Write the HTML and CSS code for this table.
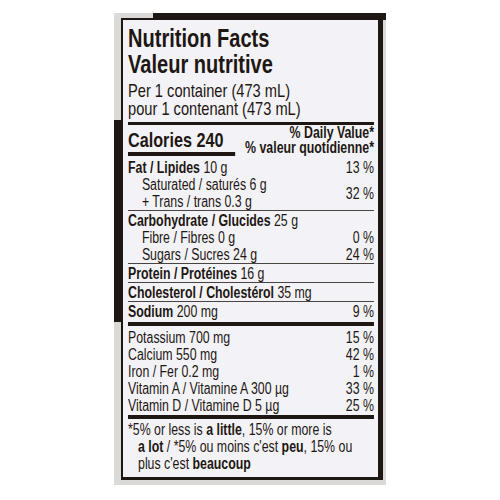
FILE: index.html
```
<!DOCTYPE html>
<html lang="en">
<head>
  <meta charset="utf-8">
  <link rel="stylesheet" href="styles.css">
</head>
<body>
  <div class="paper">
    <div class="label">
      <div class="content">
        <h1 class="title">Nutrition Facts<br>Valeur nutritive</h1>
        <div class="serving">Per 1 container (473 mL)<br>pour 1 contenant (473 mL)</div>

        <div class="cal-head">
          <div class="calories">Calories 240</div>
          <div class="dv">% Daily Value*<br>% valeur quotidienne*</div>
        </div>

        <div class="group first">
          <div class="row"><span><b>Fat / Lipides</b> 10 g</span><span>13 %</span></div>
          <div class="row">
            <span class="sub">Saturated / saturés 6 g<br>+ Trans / trans 0.3 g</span>
            <span>32 %</span>
          </div>
        </div>

        <div class="group">
          <div class="row"><span><b>Carbohydrate / Glucides</b> 25 g</span></div>
          <div class="row"><span class="sub">Fibre / Fibres 0 g</span><span>0 %</span></div>
          <div class="row"><span class="sub">Sugars / Sucres 24 g</span><span>24 %</span></div>
        </div>

        <div class="group">
          <div class="row"><span><b>Protein / Protéines</b> 16 g</span></div>
        </div>
        <div class="group">
          <div class="row"><span><b>Cholesterol / Cholestérol</b> 35 mg</span></div>
        </div>
        <div class="group last">
          <div class="row"><span><b>Sodium</b> 200 mg</span><span>9 %</span></div>
        </div>

        <div class="minerals">
          <div class="row"><span>Potassium 700 mg</span><span>15 %</span></div>
          <div class="row"><span>Calcium 550 mg</span><span>42 %</span></div>
          <div class="row"><span>Iron / Fer 0.2 mg</span><span>1 %</span></div>
          <div class="row"><span>Vitamin A / Vitamine A 300 µg</span><span>33 %</span></div>
          <div class="row"><span>Vitamin D / Vitamine D 5 µg</span><span>25 %</span></div>
        </div>

        <p class="note">*5% or less is <b>a little</b>, 15% or more is<br><b>a lot</b> / *5% ou moins c'est <b>peu</b>, 15% ou<br>plus c'est <b>beaucoup</b></p>
      </div>
    </div>
  </div>
</body>
</html>
```

FILE: styles.css
```
body {
  margin: 0;
  background: #ffffff;
  font-family: "Liberation Sans", Arial, sans-serif;
  color: #1e1713;
}
/* photographed carton around the label */
.paper {
  width: 262px;
  margin: 13px 0 0 114px;
  padding: 5px 3px 5px 7px;
  background-color: #dcdad8;
  background-image:
    linear-gradient(#1e1713, #1e1713),
    linear-gradient(to bottom, #dcdad8 0 107px, #1e1713 107px 309px, #dcdad8 309px);
  background-position: 39px 0, 0 0;
  background-size: 100% 7px, 7px 100%;
  background-repeat: no-repeat;
}
.label {
  background: #f3f3f7;
  border: 2px solid #1e1713;
  border-right-width: 5px;
  border-bottom-width: 3px;
  padding: 0 6px 0 5px;
}
/* the print uses a condensed face: squeeze a regular one */
.content {
  width: 319px;
  transform: scaleX(0.771);
  transform-origin: 0 0;
}
.title {
  margin: 0;
  padding-top: 5px;
  font-size: 26px;
  line-height: 26px;
  font-weight: bold;
}
.serving {
  margin-top: 5px;
  font-size: 19px;
  line-height: 18px;
  padding-bottom: 4px;
  border-bottom: 3px solid #1e1713;
}
.cal-head {
  display: flex;
  justify-content: space-between;
  align-items: flex-start;
}
.calories {
  width: 139px;
  padding-top: 4px;
  padding-bottom: 2px;
  border-bottom: 4px solid #1e1713;
  font-size: 21px;
  line-height: 21px;
  font-weight: bold;
}
.dv {
  font-size: 16px;
  line-height: 15px;
  font-weight: bold;
  text-align: right;
}
.group {
  border-top: 1px solid #4a4440;
  padding: 1px 0 0;
}
.group.first {
  border-top: none;
  padding-top: 3px;
}
.group.last {
  padding-bottom: 2px;
}
.row {
  display: flex;
  justify-content: space-between;
  align-items: center;
  font-size: 16px;
  line-height: 17px;
}
.sub {
  padding-left: 18px;
}
.minerals {
  border-top: 4px solid #1e1713;
  padding: 3px 0 1px;
}
.note {
  margin: 0;
  border-top: 4px solid #1e1713;
  padding: 2px 0 5px 13px;
  text-indent: -13px;
  font-size: 16px;
  line-height: 17px;
}
```
